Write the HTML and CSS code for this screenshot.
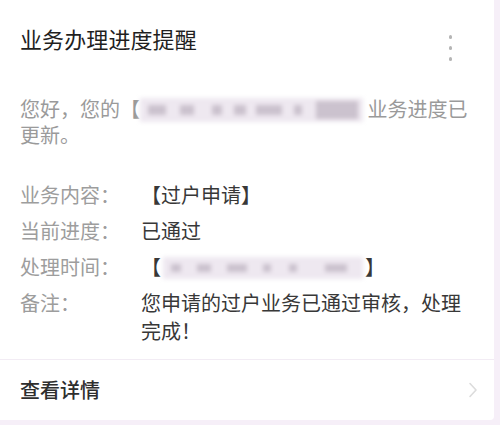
FILE: index.html
```html
<!DOCTYPE html>
<html lang="zh-CN">
<head>
<meta charset="utf-8">
<link rel="stylesheet" href="styles.css">
</head>
<body>
<div class="card">
  <div class="header">
    <h1 class="title">业务办理进度提醒</h1>
    <div class="more"><span></span><span></span><span></span></div>
  </div>
  <p class="greeting">您好，您的【<span class="mask mask-a"><i class="b1"></i><i class="b2"></i><i class="b3"></i><i class="b4"></i><i class="b5"></i><i class="b6"></i><i class="b7"></i></span> 业务进度已更新。</p>
  <div class="rows">
    <div class="row"><span class="label">业务内容：</span><span class="value">【过户申请】</span></div>
    <div class="row"><span class="label">当前进度：</span><span class="value">已通过</span></div>
    <div class="row"><span class="label">处理时间：</span><span class="value">【<span class="mask mask-b"><i class="c1"></i><i class="c2"></i><i class="c3"></i><i class="c4"></i><i class="c5"></i><i class="c6"></i></span>】</span></div>
    <div class="row"><span class="label">备注：</span><span class="value">您申请的过户业务已通过审核，处理完成！</span></div>
  </div>
  <div class="footer">
    <span class="link">查看详情</span>
    <svg class="chev" width="10" height="16" viewBox="0 0 10 16"><polyline points="2,1.5 8,8 2,14.5" fill="none" stroke="#dcdcdc" stroke-width="1.6" stroke-linecap="round" stroke-linejoin="round"/></svg>
  </div>
</div>
</body>
</html>
```
FILE: styles.css
```css
* { box-sizing: border-box; }
html, body { margin: 0; padding: 0; }
body {
  width: 500px;
  height: 425px;
  background: #f6eff8;
  font-family: "Noto Sans CJK SC", "Noto Sans", sans-serif;
  overflow: hidden;
}
.card {
  width: 494px;
  height: 420px;
  background: #fff;
  border-bottom-right-radius: 4px;
  display: flex;
  flex-direction: column;
}
.header {
  display: flex;
  justify-content: space-between;
  align-items: flex-start;
  padding: 23px 0 0 20px;
}
.title {
  margin: 0;
  font-size: 22px;
  line-height: 30px;
  font-weight: 400;
  color: #1f1f1f;
  letter-spacing: 0.1px;
}
.more {
  display: flex;
  flex-direction: column;
  gap: 7.5px;
  margin: 12px 42px 0 0;
}
.more span {
  width: 3.5px;
  height: 3.5px;
  border-radius: 50%;
  background: #b5b5b5;
}
.greeting {
  margin: 35px 20px 0 20px;
  font-size: 20px;
  line-height: 26px;
  color: #9a9a9a;
}
.mask {
  display: inline-block;
  position: relative;
  vertical-align: -5px;
  background: #eee8f0;
  filter: blur(2px);
}
.mask i {
  position: absolute;
  top: 7px;
  height: 10px;
  background: #cbc2ce;
}
.mask-a { width: 223px; height: 24px; }
.mask-a .b1 { left: 8px; width: 18px; }
.mask-a .b2 { left: 40px; width: 14px; }
.mask-a .b3 { left: 72px; width: 10px; }
.mask-a .b4 { left: 94px; width: 12px; }
.mask-a .b5 { left: 116px; width: 26px; }
.mask-a .b6 { left: 154px; width: 8px; }
.mask-a .b7 { left: 176px; width: 42px; top: 3px; height: 18px; }
.rows {
  margin: 33px 20px 0 20px;
  display: flex;
  flex-direction: column;
  gap: 8px;
}
.row {
  display: flex;
  font-size: 20px;
  line-height: 28px;
}
.label {
  width: 121px;
  flex: none;
  color: #9d9d9d;
}
.value {
  color: #383838;
  flex: 1;
}
.mask-b { width: 200px; height: 22px; vertical-align: -4px; margin: 0 2px; }
.mask-b i { top: 7px; height: 8px; }
.mask-b .c1 { left: 8px; width: 10px; }
.mask-b .c2 { left: 34px; width: 14px; }
.mask-b .c3 { left: 64px; width: 20px; }
.mask-b .c4 { left: 100px; width: 8px; }
.mask-b .c5 { left: 126px; width: 8px; }
.mask-b .c6 { left: 162px; width: 22px; }
.footer {
  margin-top: auto;
  height: 61px;
  border-top: 1px solid #f2ecf4;
  display: flex;
  align-items: center;
  justify-content: space-between;
  padding: 0 16px 0 20px;
}
.link {
  font-size: 20px;
  line-height: 28px;
  color: #2e2e2e;
  font-weight: 500;
}
.chev { display: block; }
```
